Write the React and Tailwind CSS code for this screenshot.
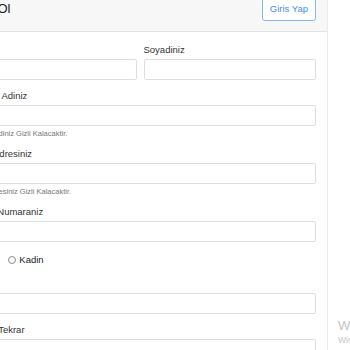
export default function App() {
  const label = "block text-[9.5px] leading-[12px] text-[#333] mb-[3px]"
  const input = "block w-full h-[21px] border border-[#dedede] rounded-[2px] bg-white"
  const hint = "mt-[3px] text-[7.5px] leading-[9px] text-[#777]"

  return (
    <div className="relative w-[350px] h-[350px] overflow-hidden bg-white font-['Liberation_Sans',Arial,sans-serif]">
      <div className="ml-[-48px] mt-[-14px] w-[376px] border border-[#ebebeb] rounded-[3px]">
        <div className="flex items-center justify-between h-[45px] px-[11px] bg-[#f7f7f7] border-b border-[#e3e3e3]">
          <h4 className="text-[13px] text-[#222] pl-[1px]">Kayit Ol</h4>
          <button className="h-[23px] px-[7px] border border-[#86b6f2] rounded-[3px] text-[9.5px] text-[#3f8fe8] bg-white">
            Giris Yap
          </button>
        </div>

        <form className="px-[11px] pt-[12px]">
          <div className="flex gap-[7px] mb-[10px]">
            <div className="flex-1">
              <label className={label}>Adiniz</label>
              <input className={input} />
            </div>
            <div className="flex-1">
              <label className={label}>Soyadiniz</label>
              <input className={input} />
            </div>
          </div>

          <div className="mb-[10px]">
            <label className={label}>Kullanici Adiniz</label>
            <input className={input} />
            <p className={hint}>Kullanici Adiniz Gizli Kalacaktir.</p>
          </div>

          <div className="mb-[10px]">
            <label className={label}>E-mail Adresiniz</label>
            <input className={input} />
            <p className={hint}>E-mail Adresiniz Gizli Kalacaktir.</p>
          </div>

          <div className="mb-[10px]">
            <label className={label}>Telefon Numaraniz</label>
            <input className={input} />
          </div>

          <div className="flex items-center gap-[9px] h-[16px] mb-[10px] text-[9.5px] text-[#222]">
            <label className="flex items-center gap-[3px]">
              <span className="w-[8px] h-[8px] rounded-full border border-[#8a8a8a] bg-white" />
              Erkek
            </label>
            <label className="flex items-center gap-[3px]">
              <span className="w-[8px] h-[8px] rounded-full border border-[#8a8a8a] bg-white" />
              Kadin
            </label>
          </div>

          <div className="mb-[10px]">
            <label className={label}>Sifreniz</label>
            <input className={input} />
          </div>

          <div className="mb-[10px]">
            <label className={label}>Sifreniz Tekrar</label>
            <input className={input} />
          </div>
        </form>
      </div>

      <div className="absolute left-[338px] top-[319px] whitespace-nowrap text-[#c4c4c4]">
        <div className="text-[13px] leading-[14px]">Windows'u Etkinleştir</div>
        <div className="text-[8.5px] leading-[11px] mt-[2px]">Windows'u etkinleştirmek için Ayarlar'a gidin.</div>
      </div>
    </div>
  )
}
